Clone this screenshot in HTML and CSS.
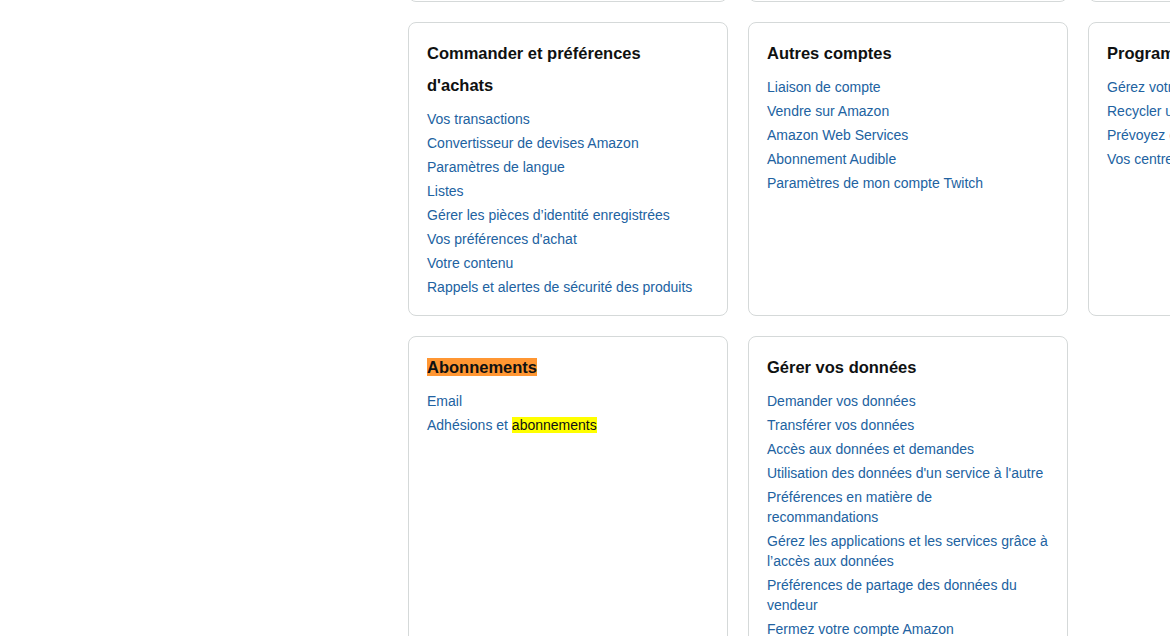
FILE: index.html
```html
<!DOCTYPE html>
<html lang="fr">
<head>
    <meta charset="UTF-8">
    <meta name="viewport" content="width=device-width, initial-scale=1.0">
    <title>Votre compte</title>
    <link rel="stylesheet" href="styles.css">
</head>
<body>

    <div class="page">
        <div class="cards">
            <!-- previous row, scrolled out of view -->
            <div class="card card-prev"></div>
            <div class="card card-prev"></div>
            <div class="card card-prev"></div>

            <div class="card">
                <h2>Commander et préférences d'achats</h2>
                <ul>
                    <li><a href="#">Vos transactions</a></li>
                    <li><a href="#">Convertisseur de devises Amazon</a></li>
                    <li><a href="#">Paramètres de langue</a></li>
                    <li><a href="#">Listes</a></li>
                    <li><a href="#">Gérer les pièces d’identité enregistrées</a></li>
                    <li><a href="#">Vos préférences d'achat</a></li>
                    <li><a href="#">Votre contenu</a></li>
                    <li><a href="#">Rappels et alertes de sécurité des produits</a></li>
                </ul>
            </div>

            <div class="card">
                <h2>Autres comptes</h2>
                <ul>
                    <li><a href="#">Liaison de compte</a></li>
                    <li><a href="#">Vendre sur Amazon</a></li>
                    <li><a href="#">Amazon Web Services</a></li>
                    <li><a href="#">Abonnement Audible</a></li>
                    <li><a href="#">Paramètres de mon compte Twitch</a></li>
                </ul>
            </div>

            <div class="card">
                <h2>Programmes d'entreprise</h2>
                <ul>
                    <li><a href="#">Gérez votre programme</a></li>
                    <li><a href="#">Recycler un appareil</a></li>
                    <li><a href="#">Prévoyez et économisez</a></li>
                    <li><a href="#">Vos centres d'intérêt</a></li>
                </ul>
            </div>

            <div class="card">
                <h2><mark class="hl-orange">Abonnements</mark></h2>
                <ul>
                    <li><a href="#">Email</a></li>
                    <li><a href="#">Adhésions et <mark class="hl-yellow">abonnements</mark></a></li>
                </ul>
            </div>

            <div class="card">
                <h2>Gérer vos données</h2>
                <ul>
                    <li><a href="#">Demander vos données</a></li>
                    <li><a href="#">Transférer vos données</a></li>
                    <li><a href="#">Accès aux données et demandes</a></li>
                    <li><a href="#">Utilisation des données d'un service à l'autre</a></li>
                    <li><a href="#">Préférences en matière de<br>recommandations</a></li>
                    <li><a href="#">Gérez les applications et les services grâce à l’accès aux données</a></li>
                    <li><a href="#">Préférences de partage des données du vendeur</a></li>
                    <li><a href="#">Fermez votre compte Amazon</a></li>
                </ul>
            </div>
        </div>
    </div>

</body>
</html>
```

FILE: styles.css
```css
body {
    margin: 0;
    padding: 0;
    background-color: #fff;
    color: #0f1111;
    font-family: "Liberation Sans", Arial, sans-serif;
    overflow: hidden;
}

.page {
    padding-left: 408px;
    margin-top: -98px;
}

.cards {
    display: grid;
    grid-template-columns: repeat(3, 320px);
    gap: 20px;
}

.card {
    border: 1px solid #d5d9d9;
    border-radius: 8px;
    padding: 14px 18px 16px;
}

.card-prev {
    height: 100px;
    box-sizing: border-box;
}

.card h2 {
    margin: 0 0 6px;
    font-size: 16.5px;
    font-weight: 700;
    line-height: 32px;
}

.card ul {
    list-style: none;
    margin: 0;
    padding: 0;
}

.card li {
    font-size: 14px;
    line-height: 20px;
    padding: 2px 0;
}

.card a {
    color: #2162a1;
    text-decoration: none;
}

.hl-orange {
    background-color: #ff9632;
    color: #0f1111;
}

.hl-yellow {
    background-color: #ffff00;
    color: #0f1111;
}
```
